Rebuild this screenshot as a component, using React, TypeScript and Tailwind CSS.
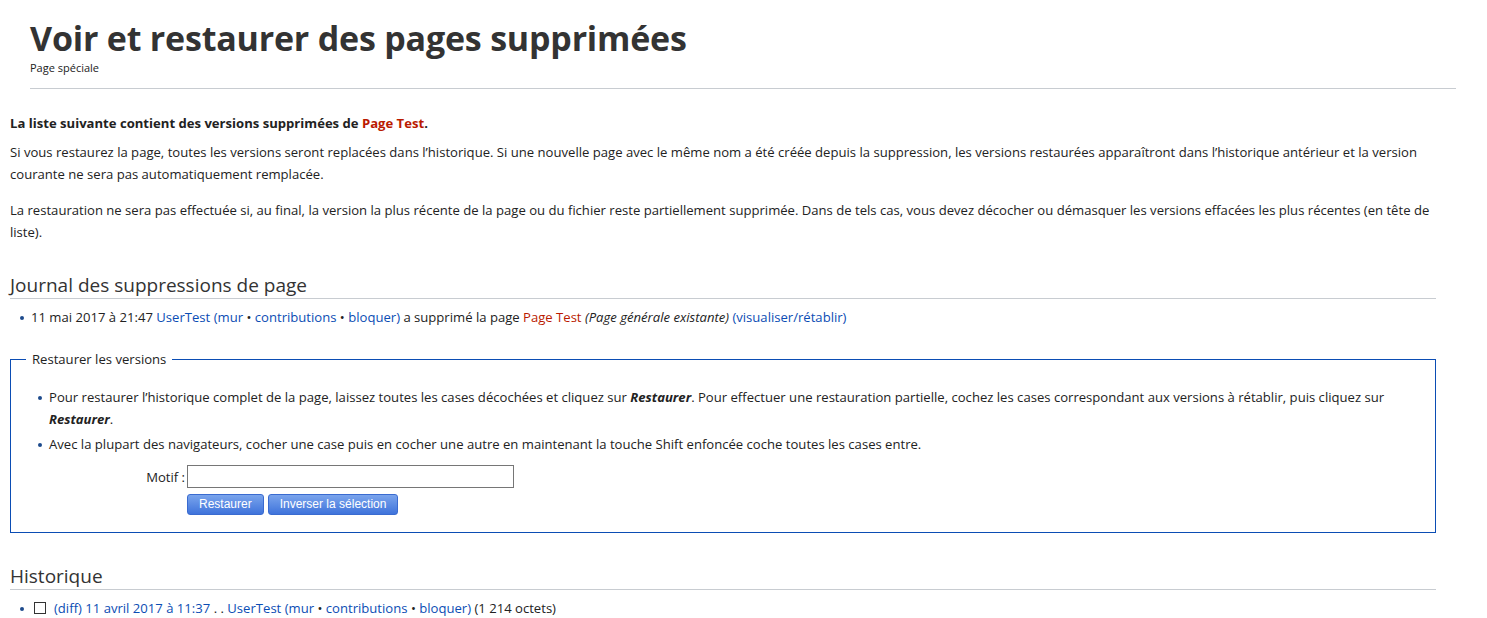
const font = { fontFamily: '"Open Sans", "Noto Sans", sans-serif' };

function Link({ children, red = false }: { children: React.ReactNode; red?: boolean }) {
  return <a className={red ? 'text-[#ba1a00]' : 'text-[#0b4db4]'}>{children}</a>;
}

function Dot() {
  return <span className="text-[#222]"> • </span>;
}

function Bullet() {
  return <span className="mt-[10px] mr-[7px] size-[4px] shrink-0 rounded-full bg-[#1d4a8c]" />;
}

const btn =
  'h-[21px] rounded-[3px] border border-[#3a6bd0] bg-gradient-to-b from-[#7aa4ec] to-[#3f73db] px-[11px] text-[12px] leading-[19px] text-white';

export default function App() {
  return (
    <div className="min-h-[618px] bg-white text-[13.1px] text-[#222]" style={font}>
      <header className="ml-[30px] mr-[31px] border-b border-[#c8ccd1] pt-[15px] pb-[13px]">
        <h1 className="text-[34px] font-bold leading-[46px] text-[#333] tracking-[-0.2px]">
          Voir et restaurer des pages supprimées
        </h1>
        <div className="text-[11px] leading-[14px] text-[#222]">Page spéciale</div>
      </header>

      <main className="mx-[10px] mr-[51px] pt-[23px] leading-[22px]">
        <p className="font-bold">
          La liste suivante contient des versions supprimées de <Link red>Page Test</Link>.
        </p>
        <p className="mt-[7px]">
          Si vous restaurez la page, toutes les versions seront replacées dans l’historique. Si une nouvelle page avec le même nom a été créée depuis la suppression, les versions restaurées apparaîtront dans l’historique antérieur et la version courante ne sera pas automatiquement remplacée.
        </p>
        <p className="mt-[14px]">
          La restauration ne sera pas effectuée si, au final, la version la plus récente de la page ou du fichier reste partiellement supprimée. Dans de tels cas, vous devez décocher ou démasquer les versions effacées les plus récentes (en tête de liste).
        </p>

        <h2 className="mt-[29px] border-b border-[#c8ccd1] text-[19px] leading-[26px] text-[#333]">
          Journal des suppressions de page
        </h2>
        <ul className="mt-[7px] pl-[10px]">
          <li className="flex items-start">
            <Bullet />
            <span>
              11 mai 2017 à 21:47 <Link>UserTest</Link> <Link>(mur</Link>
              <Dot />
              <Link>contributions</Link>
              <Dot />
              <Link>bloquer)</Link> a supprimé la page <Link red>Page Test</Link>{' '}
              <i>(Page générale existante)</i> <Link>(visualiser/rétablir)</Link>
            </span>
          </li>
        </ul>

        <fieldset className="mt-[22px] border border-[#0b4db4] px-[20px] pb-[17px] pt-[18px]">
          <legend className="-ml-[5px] px-[6px] leading-[18px]">Restaurer les versions</legend>
          <ul className="pl-[7px]">
            <li className="flex items-start">
              <Bullet />
              <span>
                Pour restaurer l’historique complet de la page, laissez toutes les cases décochées et cliquez sur <b><i>Restaurer</i></b>. Pour effectuer une restauration partielle, cochez les cases correspondant aux versions à rétablir, puis cliquez sur <b><i>Restaurer</i></b>.
              </span>
            </li>
            <li className="mt-[3px] flex items-start">
              <Bullet />
              <span>
                Avec la plupart des navigateurs, cocher une case puis en cocher une autre en maintenant la touche Shift enfoncée coche toutes les cases entre.
              </span>
            </li>
          </ul>
          <div className="mt-[10px] grid grid-cols-[154px_auto] gap-x-[2px] gap-y-[6px]">
            <label className="self-center text-right">Motif :</label>
            <input className="h-[23px] w-[327px] border border-[#767676] bg-white" />
            <div />
            <div className="flex gap-[4px]" style={{ fontFamily: '"Liberation Sans", Arial, sans-serif' }}>
              <button className={btn}>Restaurer</button>
              <button className={btn}>Inverser la sélection</button>
            </div>
          </div>
        </fieldset>

        <h2 className="mt-[30px] border-b border-[#c8ccd1] text-[19px] leading-[26px] text-[#333]">Historique</h2>
        <ul className="mt-[7px] pl-[10px]">
          <li className="flex items-start">
            <Bullet />
            <span className="mt-[5px] ml-[3px] mr-[8px] size-[12px] shrink-0 border border-[#333] bg-white" />
            <span>
              <Link>(diff)</Link> <Link>11 avril 2017 à 11:37</Link> . . <Link>UserTest</Link> <Link>(mur</Link>
              <Dot />
              <Link>contributions</Link>
              <Dot />
              <Link>bloquer)</Link> (1 214 octets)
            </span>
          </li>
        </ul>
      </main>
    </div>
  );
}
